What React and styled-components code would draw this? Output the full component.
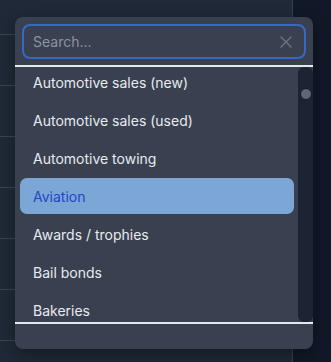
import React from 'react';
import styled, { createGlobalStyle } from 'styled-components';

const GlobalStyle = createGlobalStyle`
  html, body {
    margin: 0;
    padding: 0;
    background: #111827;
    font-family: Inter, "Noto Sans", "Liberation Sans", sans-serif;
    -webkit-font-smoothing: antialiased;
  }
`;

const Page = styled.div`
  position: relative;
  width: 331px;
  height: 362px;
  overflow: hidden;
  display: grid;
  grid-template-columns: 293px 1fr;
  background: #111827;
`;

const SidePanel = styled.div`
  background: #1f2937;
  border-right: 1px solid #374151;
  display: flex;
  flex-direction: column;
  margin-top: -16px;
`;

const PanelRow = styled.div`
  height: 50px;
  flex-shrink: 0;
  border-bottom: 1px solid #3b4453;
`;

const Popover = styled.div`
  position: absolute;
  left: 15px;
  top: 17px;
  width: 298px;
  height: 332px;
  background: #394151;
  border-radius: 8px;
  display: flex;
  flex-direction: column;
  overflow: hidden;
  box-shadow: 0 6px 16px rgba(0, 0, 0, 0.35);
`;

const SearchWrap = styled.div`
  padding: 7px 7px 6px;
`;

const SearchBox = styled.div`
  height: 35px;
  box-sizing: border-box;
  border: 2px solid #3868c2;
  border-radius: 8px;
  display: flex;
  align-items: center;
  padding: 0 12px 0 9px;
`;

const SearchInput = styled.input`
  flex: 1;
  min-width: 0;
  background: transparent;
  border: none;
  outline: none;
  color: #e5e7eb;
  font-family: inherit;
  font-size: 14px;
  padding: 0;
  caret-color: #e5e7eb;

  &::placeholder {
    color: #8d939e;
  }
`;

const Divider = styled.div`
  height: 2px;
  background: #e6e8ec;
  flex-shrink: 0;
`;

const ListArea = styled.div`
  height: 255px;
  display: flex;
  overflow: hidden;
`;

const Options = styled.ul`
  list-style: none;
  margin: -3px 0 0;
  padding: 0;
  flex: 1;
  display: flex;
  flex-direction: column;
  gap: 2px;
`;

const Option = styled.li`
  height: 36px;
  flex-shrink: 0;
  margin: 0 4px 0 5px;
  padding-left: 13px;
  display: flex;
  align-items: center;
  border-radius: 7px;
  font-size: 14px;
  color: ${({ active }) => (active ? '#2146c7' : '#e8eaee')};
  background: ${({ active }) => (active ? '#7ba6d6' : 'transparent')};
`;

const Track = styled.div`
  position: relative;
  width: 15px;
  background: #1c2333;
  border-radius: 6px;
  flex-shrink: 0;
`;

const Thumb = styled.div`
  position: absolute;
  left: 2px;
  top: 21px;
  width: 10px;
  height: 10px;
  border-radius: 50%;
  background: #5f6776;
  border: 1px solid #141a26;
`;

const Footer = styled.div`
  flex: 1;
`;

const ClearIcon = () => (
  <svg width="12" height="12" viewBox="0 0 12 12" fill="none">
    <path d="M1 1L11 11M11 1L1 11" stroke="#6f7581" strokeWidth="1.3" strokeLinecap="round" />
  </svg>
);

const options = [
  'Automotive sales (new)',
  'Automotive sales (used)',
  'Automotive towing',
  'Aviation',
  'Awards / trophies',
  'Bail bonds',
  'Bakeries',
];

export default function App() {
  return (
    <>
      <GlobalStyle />
      <Page>
        <SidePanel>
          {Array.from({ length: 8 }).map((_, i) => (
            <PanelRow key={i} />
          ))}
        </SidePanel>
        <div />
        <Popover>
          <SearchWrap>
            <SearchBox>
              <SearchInput placeholder="Search..." autoFocus />
              <ClearIcon />
            </SearchBox>
          </SearchWrap>
          <Divider />
          <ListArea>
            <Options>
              {options.map((o) => (
                <Option key={o} active={o === 'Aviation'}>
                  {o}
                </Option>
              ))}
            </Options>
            <Track>
              <Thumb />
            </Track>
          </ListArea>
          <Divider />
          <Footer />
        </Popover>
      </Page>
    </>
  );
}
